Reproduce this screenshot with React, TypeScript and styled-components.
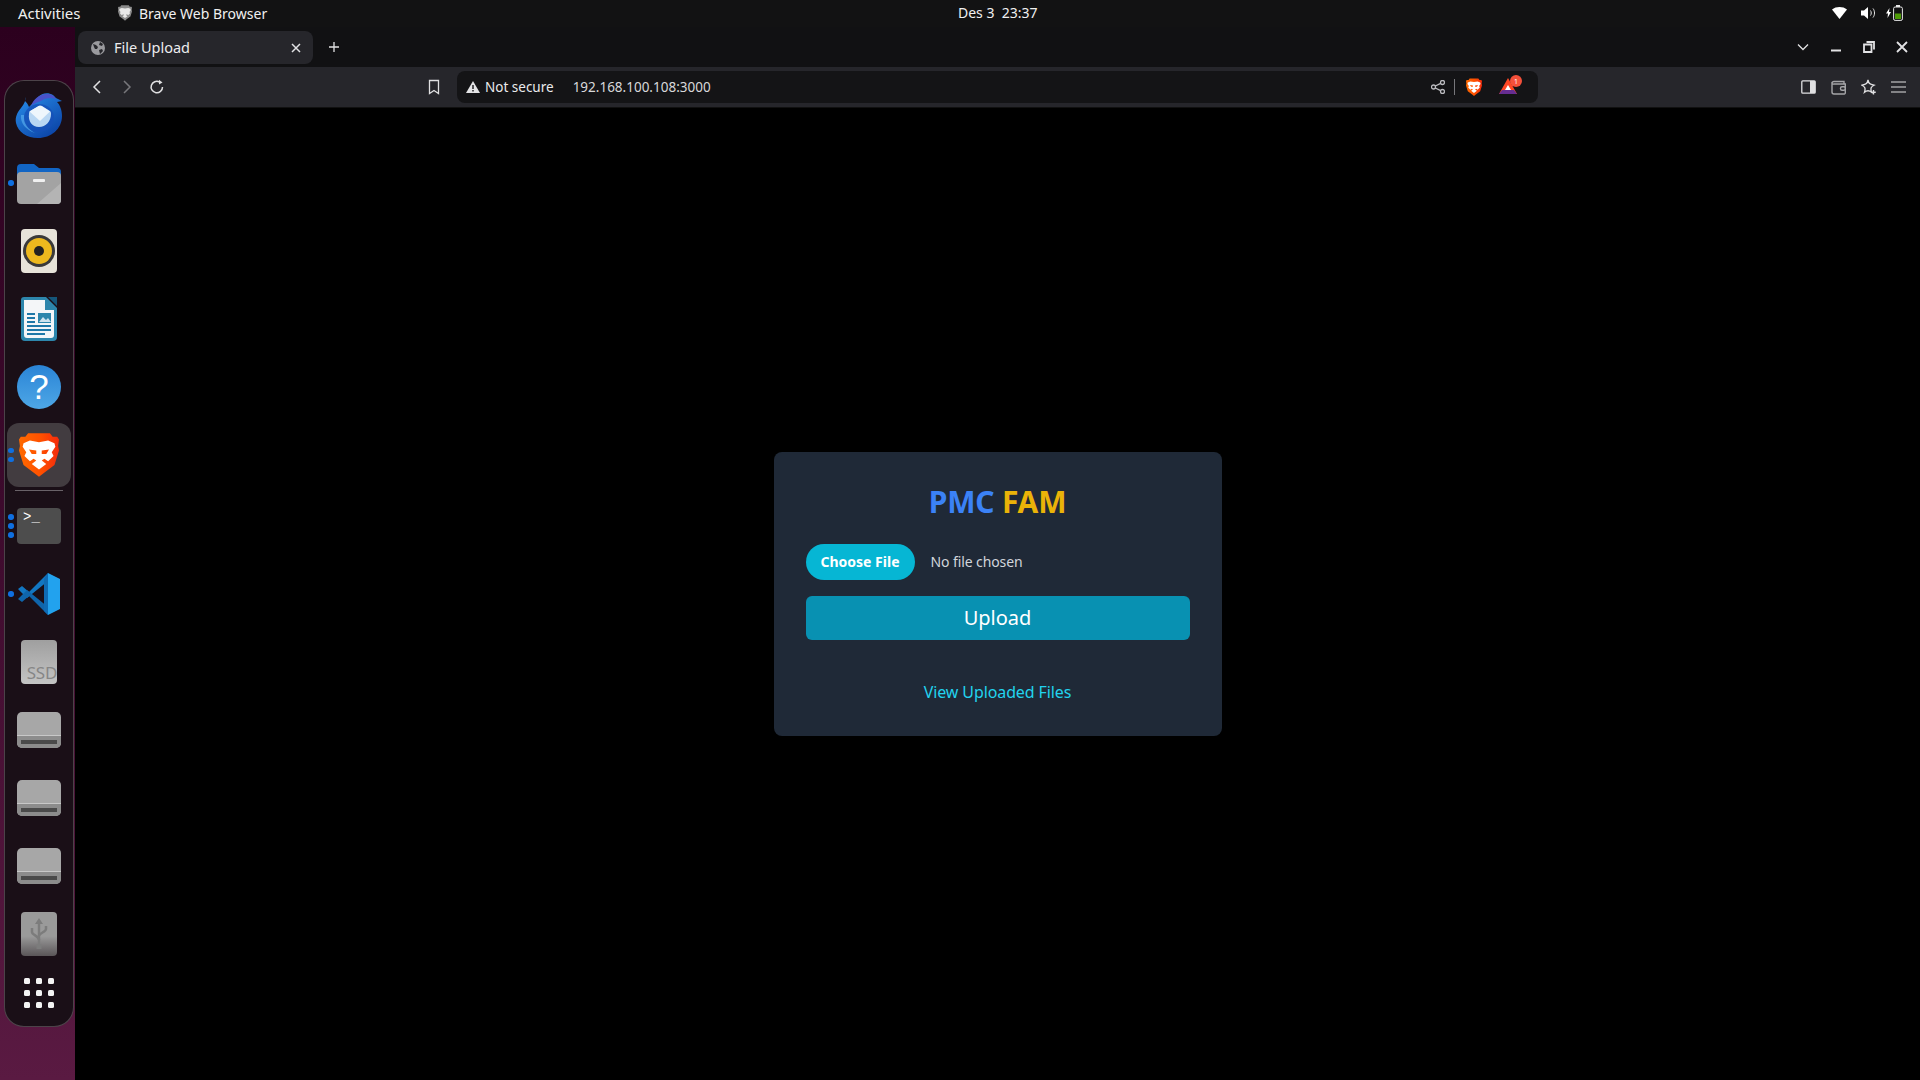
import styled, { createGlobalStyle } from "styled-components";
import { ReactNode } from "react";

const uiFont = `"Noto Sans", "Open Sans", sans-serif`;

const GlobalStyle = createGlobalStyle`
  html, body {
    margin: 0;
    padding: 0;
    height: 100%;
    background: #000;
    overflow: hidden;
  }
  #root {
    height: 100%;
  }
  * {
    box-sizing: border-box;
  }
`;

const BraveShield = ({ size = 40 }: { size?: number }) => (
  <svg width={size} height={size * 1.15} viewBox="0 0 44 50">
    <defs>
      <linearGradient id="braveFill" x1="0" y1="0" x2="1" y2="0">
        <stop offset="0" stopColor="#ff6a00" />
        <stop offset="0.55" stopColor="#ff5000" />
        <stop offset="1" stopColor="#f42a0c" />
      </linearGradient>
    </defs>
    <path
      d="M10 1h24l3 4h5l2 3-1 7 1 5-5 16-12 9-5 4-5-4-12-9-5-16 1-5-1-7 2-3h5z"
      fill="url(#braveFill)"
    />
    <path
      d="M12 9l10 2 10-2 7 3 1 4-4 6 2 4-6 6-4-3-3 2 5 4-8 6-8-6 5-4-3-2-4 3-6-6 2-4-4-6 1-4zM11 19l8 1v4h-5zM33 19l-8 1v4h5z"
      fill="#fff"
      fillRule="evenodd"
    />
  </svg>
);

const SmallShield = () => (
  <svg width="14" height="16" viewBox="0 0 44 50">
    <path
      d="M10 1h24l3 4h5l2 3-1 7 1 5-5 16-12 9-5 4-5-4-12-9-5-16 1-5-1-7 2-3h5z"
      fill="#8b8b8b"
    />
    <path d="M12 9l10 2 10-2 7 3 1 4-4 6 2 4-6 6-4-3-3 2 5 4-8 6-8-6 5-4-3-2-4 3-6-6 2-4-4-6 1-4z" fill="#e8e8e8" />
  </svg>
);

const Thunderbird = () => (
  <svg width="50" height="48" viewBox="0 0 50 48">
    <defs>
      <linearGradient id="birdBlue" x1="0" y1="0" x2="0.7" y2="1">
        <stop offset="0" stopColor="#2a93ee" />
        <stop offset="1" stopColor="#0c45a8" />
      </linearGradient>
    </defs>
    <path
      d="M11 6c1 4-1 7-4 11C3 22 1 26 2 32c2 9 11 15 22 15 13 0 24-9 24-22 0-6-2-11-5-14l5-1-6-3-3-3c-5-3-11-2-15 2l-5 6-4 4c-1-3-3-5-4-6z"
      fill="url(#birdBlue)"
    />
    <path d="M17 15c2-6 8-12 16-12 4 0 8 2 9 5-5-2-11-1-15 2-4 1-8 3-10 5z" fill="#4a52c8" />
    <path d="M7 24c-1 8 5 15 14 18-7-4-11-10-11-18z" fill="#5fb4f2" opacity="0.6" />
    <ellipse cx="25" cy="27" rx="15" ry="14" fill="#1550b8" opacity="0.8" />
    <path d="M16 20l9-5c1-.500 2-.500 3 0l8 5c1 1 1 2 1 3 0 7-5 13-12 13s-11-6-10-13c0-1 0-2 1-3z" fill="#b9d7f3" />
    <path d="M15.500 20.500l9-5.500c1-.500 2-.500 3 0l8.500 5.500L26 30z" fill="#eef6fc" />
  </svg>
);

const FilesIcon = () => (
  <svg width="44" height="41" viewBox="0 0 44 41">
    <path d="M0 5a4 4 0 0 1 4-4h13l5 4h18a4 4 0 0 1 4 4v14H0z" fill="#1265c4" />
    <rect x="0" y="9" width="44" height="32" rx="4" fill="#a3a3a3" />
    <path d="M44 20v17a4 4 0 0 1-4 4H20z" fill="#b4b4b4" />
    <rect x="16" y="16" width="12" height="3" rx="1" fill="#f0f0f0" />
  </svg>
);

const RhythmboxIcon = () => (
  <svg width="36" height="44" viewBox="0 0 36 44">
    <rect x="0" y="0" width="36" height="44" rx="4" fill="#e7e3d9" />
    <circle cx="18" cy="22" r="16" fill="#3a3a3a" />
    <circle cx="18" cy="22" r="13" fill="#edb91e" />
    <circle cx="18" cy="22" r="5" fill="#222" />
  </svg>
);

const WriterIcon = () => (
  <svg width="36" height="44" viewBox="0 0 36 44">
    <path d="M3 0h22l11 11v29a4 4 0 0 1-4 4H4a4 4 0 0 1-4-4V3a3 3 0 0 1 3-3z" fill="#2d86ac" />
    <path d="M3 3h21v10h9v25a3 3 0 0 1-3 3H6a3 3 0 0 1-3-3z" fill="#f4f6f8" />
    <path d="M27 0h9v9z" fill="#15567a" />
    <rect x="6" y="16" width="8" height="2" fill="#1f78a8" />
    <rect x="6" y="20" width="8" height="2" fill="#1f78a8" />
    <rect x="6" y="24" width="8" height="2" fill="#1f78a8" />
    <rect x="6" y="28" width="24" height="2" fill="#1f78a8" />
    <rect x="6" y="32" width="24" height="2" fill="#1f78a8" />
    <rect x="6" y="36" width="18" height="2" fill="#1f78a8" />
    <rect x="17" y="16" width="13" height="10" fill="#2d86ac" />
    <path d="M18 25l4-5 3 3 2-2 3 4z" fill="#cfe3ee" />
  </svg>
);

const VsCodeIcon = () => (
  <svg width="42" height="42" viewBox="0 0 42 42">
    <path d="M30 0l12 6v30l-12 6z" fill="#22a2ee" />
    <path d="M30 0L11 19l-7-6-4 3 9 9 21-17z" fill="#1277c2" />
    <path d="M30 42L11 23l-7 6-4-3 9-9 21 17z" fill="#0f65ab" />
    <path d="M30 0v42l-4-4V6z" fill="#0f6bb4" />
  </svg>
);

const DriveIcon = () => (
  <svg width="44" height="36" viewBox="0 0 44 36">
    <rect x="0" y="0" width="44" height="36" rx="5" fill="#a7a7a7" />
    <path d="M0 24h44v7a5 5 0 0 1-5 5H5a5 5 0 0 1-5-5z" fill="#8c8c8c" />
    <rect x="0" y="23" width="44" height="1" fill="#c8c8c8" />
    <rect x="4" y="28" width="36" height="4" fill="#4a4a4a" />
  </svg>
);

const UsbGlyph = () => (
  <svg width="20" height="32" viewBox="0 0 20 32" fill="none" stroke="#7c7c7c" strokeWidth="2.500">
    <path d="M10 4v24" />
    <path d="M10 0l-4 6h8z" fill="#7c7c7c" stroke="none" />
    <path d="M3 10v4c0 3 7 4 7 8" />
    <path d="M17 8v3c0 3-7 4-7 7" />
    <rect x="7.500" y="26" width="5" height="5" fill="#7c7c7c" stroke="none" />
  </svg>
);

const dockDots = (count: number) => (
  <RunningDots>
    {Array.from({ length: count }).map((_, i) => (
      <RunningDot key={i} />
    ))}
  </RunningDots>
);

const Dock = () => (
  <DockPanel>
    <DockItem>
      <Thunderbird />
    </DockItem>
    <DockItem>
      {dockDots(1)}
      <FilesIcon />
    </DockItem>
    <DockItem>
      <RhythmboxIcon />
    </DockItem>
    <DockItem>
      <WriterIcon />
    </DockItem>
    <DockItem>
      <HelpBall>?</HelpBall>
    </DockItem>
    <DockItem>
      <ActiveTile>
        <BraveShield />
      </ActiveTile>
      {dockDots(2)}
    </DockItem>
    <DockSeparator />
    <DockItem>
      {dockDots(3)}
      <TerminalTile>&gt;_</TerminalTile>
    </DockItem>
    <DockItem>
      {dockDots(1)}
      <VsCodeIcon />
    </DockItem>
    <DockItem>
      <SsdTile>SSD</SsdTile>
    </DockItem>
    <DockItem>
      <DriveIcon />
    </DockItem>
    <DockItem>
      <DriveIcon />
    </DockItem>
    <DockItem>
      <DriveIcon />
    </DockItem>
    <DockItem>
      <UsbTile>
        <UsbGlyph />
      </UsbTile>
    </DockItem>
    <AppGrid>
      {Array.from({ length: 9 }).map((_, i) => (
        <AppGridDot key={i} />
      ))}
    </AppGrid>
  </DockPanel>
);

const Icon = ({ w = 16, h = 16, children }: { w?: number; h?: number; children: ReactNode }) => (
  <svg width={w} height={h} viewBox={`0 0 ${w} ${h}`} fill="none" stroke="currentColor" strokeWidth="1.300">
    {children}
  </svg>
);

const TabBar = () => (
  <TabStrip>
    <Tab>
      <svg width="14" height="14" viewBox="0 0 14 14">
        <circle cx="7" cy="7" r="7" fill="#9a9a9e" />
        <path d="M2 3l3 1 2 2-1 2-2 0-1-2zM9 1l3 2-1 2-3-1zM8 9l3-1 1 2-3 3z" fill="#26262b" />
      </svg>
      <TabTitle>File Upload</TabTitle>
      <TabClose>
        <Icon w={10} h={10}>
          <path d="M1 1l8 8M9 1l-8 8" strokeWidth="1.500" />
        </Icon>
      </TabClose>
    </Tab>
    <NewTab>
      <Icon w={12} h={12}>
        <path d="M6 1v10M1 6h10" />
      </Icon>
    </NewTab>
    <WindowControls>
      <Icon w={12} h={8}>
        <path d="M1 1.500l5 5 5-5" />
      </Icon>
      <Icon w={12} h={12}>
        <path d="M1 9.500h10" strokeWidth="2" />
      </Icon>
      <Icon w={12} h={12}>
        <path d="M3.500 1h7.500v7.500M1 3.500h7.500V11H1z" strokeWidth="1.800" />
      </Icon>
      <Icon w={12} h={12}>
        <path d="M1 1l10 10M11 1L1 11" strokeWidth="1.800" />
      </Icon>
    </WindowControls>
  </TabStrip>
);

const AddressBar = () => (
  <Toolbar>
    <NavIcon>
      <Icon w={10} h={14}>
        <path d="M8 1L2 7l6 6" strokeWidth="1.500" />
      </Icon>
    </NavIcon>
    <NavIcon $dim>
      <Icon w={10} h={14}>
        <path d="M2 1l6 6-6 6" strokeWidth="1.500" />
      </Icon>
    </NavIcon>
    <NavIcon>
      <Icon w={16} h={16}>
        <path d="M13.500 8A5.700 5.700 0 1 1 10.500 3" strokeWidth="1.500" />
        <path d="M10 .8l3.500 2.700-3.500 2z" fill="currentColor" stroke="none" />
      </Icon>
    </NavIcon>
    <BookmarkSlot>
      <Icon w={12} h={16}>
        <path d="M1.500 1.500h9v13L6 11.500l-4.500 3z" strokeWidth="1.300" />
      </Icon>
    </BookmarkSlot>
    <UrlBar>
      <svg width="14" height="12" viewBox="0 0 14 12">
        <path d="M7 0l7 12H0z" fill="#e4e4e6" />
        <rect x="6.300" y="4" width="1.400" height="4" fill="#141416" />
        <rect x="6.300" y="9" width="1.400" height="1.500" fill="#141416" />
      </svg>
      <NotSecure>Not secure</NotSecure>
      <UrlText>192.168.100.108:3000</UrlText>
      <UrlActions>
        <Icon w={14} h={14}>
          <circle cx="2.500" cy="7" r="2" />
          <circle cx="11.500" cy="2.500" r="2" />
          <circle cx="11.500" cy="11.500" r="2" />
          <path d="M4.300 6l5.400-2.700M4.300 8l5.400 2.700" />
        </Icon>
        <UrlDivider />
        <BraveShield size={16} />
        <BatSlot>
          <svg width="18" height="17" viewBox="0 0 18 17">
            <path d="M9 0l9 16H0z" fill="#ff4724" />
            <path d="M0 16l3-4h12l3 4z" fill="#662d91" />
            <path d="M9 7l3 5H6z" fill="#fff" />
          </svg>
          <BatBadge>1</BatBadge>
        </BatSlot>
      </UrlActions>
    </UrlBar>
    <SideTools>
      <Icon w={15} h={14}>
        <rect x=".8" y=".8" width="13.400" height="12.400" rx="1" />
        <rect x="9" y="1" width="5" height="12" fill="currentColor" stroke="none" />
      </Icon>
      <WalletTool>
        <Icon w={15} h={15}>
          <path d="M1 3.500A2 2 0 0 1 3 1.500h10v2.500M1 3.500V12a2 2 0 0 0 2 2h10.500a1 1 0 0 0 .8-1V4H3a2 2 0 0 1-2-.500z" strokeWidth="1.400" />
          <rect x="9.500" y="6.800" width="5" height="3.400" rx="1.500" strokeWidth="1.400" />
        </Icon>
      </WalletTool>
      <Icon w={15} h={16}>
        <path d="M7 1c.7 3.400 1.500 4.300 6 5.200-3 1.600-3.700 3-2.500 7C8.500 11.500 5.500 11.500 3.500 13.200c1.200-4 .5-5.400-2.500-7C5.500 5.300 6.300 4.400 7 1z" />
        <path d="M12.500 11v4.500M10.250 13.250h4.500" strokeWidth="1.400" />
      </Icon>
      <Icon w={15} h={12}>
        <path d="M0 1h15M0 6h15M0 11h15" strokeWidth="1.200" />
      </Icon>
    </SideTools>
  </Toolbar>
);

const App = () => (
  <Page>
    <GlobalStyle />
    <TopBar>
      <Activities>Activities</Activities>
      <AppMenu>
        <SmallShield />
        <span>Brave Web Browser</span>
      </AppMenu>
      <Clock>Des 3 &nbsp;23:37</Clock>
      <StatusIcons>
        <svg width="15" height="12" viewBox="0 0 15 12">
          <path d="M0 2.500C4 -.800 11 -.800 15 2.500L7.500 12z" fill="#fff" />
        </svg>
        <svg width="15" height="14" viewBox="0 0 15 14" fill="none" stroke="#e8e8e8">
          <path d="M0 4.500h3L7 1v12L3 9.500H0z" fill="#fff" stroke="none" />
          <path d="M9.500 4.500c1 1.500 1 3.500 0 5M12 2.500c2 2.500 2 6.500 0 9" />
        </svg>
        <BatteryGroup>
          <svg width="5" height="10" viewBox="0 0 5 10">
            <path d="M3.500 0L0 5.500h2L1.500 10 5 4H3z" fill="#fff" />
          </svg>
          <svg width="10" height="16" viewBox="0 0 10 16">
            <rect x=".6" y="2" width="8.800" height="13.400" rx="1.500" fill="none" stroke="#e8e8e8" strokeWidth="1" />
            <rect x="3" y="0" width="4" height="2" fill="#e8e8e8" />
            <rect x="2" y="8.500" width="6" height="5.500" fill="#4e9a06" />
          </svg>
        </BatteryGroup>
      </StatusIcons>
    </TopBar>
    <Desktop>
      <Wallpaper>
        <Dock />
      </Wallpaper>
      <Browser>
        <TabBar />
        <AddressBar />
        <Viewport>
          <Card>
            <Title>
              <TitleBlue>PMC</TitleBlue> <TitleAmber>FAM</TitleAmber>
            </Title>
            <FileRow>
              <ChooseButton>Choose File</ChooseButton>
              <FileName>No file chosen</FileName>
            </FileRow>
            <UploadButton>Upload</UploadButton>
            <FilesLink href="#files">View Uploaded Files</FilesLink>
          </Card>
        </Viewport>
      </Browser>
    </Desktop>
  </Page>
);

export default App;

const Page = styled.div`
  display: flex;
  flex-direction: column;
  width: 1920px;
  height: 1080px;
  font-family: ${uiFont};
  overflow: hidden;
`;

const TopBar = styled.header`
  display: flex;
  align-items: center;
  flex: 0 0 27px;
  position: relative;
  padding: 0 0 1px 18px;
  background: #121213;
  color: #f0f0f0;
  font-size: 14px;
`;

const Activities = styled.span`
  width: 100px;
  font-size: 15px;
`;

const AppMenu = styled.div`
  display: flex;
  align-items: center;
  gap: 7px;
`;

const Clock = styled.span`
  position: absolute;
  left: 958px;
  top: 3px;
  font-size: 14px;
`;

const StatusIcons = styled.div`
  display: flex;
  align-items: center;
  gap: 14px;
  margin-left: auto;
  margin-right: 17px;
`;

const BatteryGroup = styled.div`
  display: flex;
  align-items: center;
  gap: 2px;
  margin-left: -4px;
`;

const Desktop = styled.div`
  display: flex;
  flex: 1;
  min-height: 0;
`;

const Wallpaper = styled.aside`
  flex: 0 0 75px;
  padding: 53px 1px 0 4px;
  background: linear-gradient(180deg, #2c001e 0%, #3c0a2c 45%, #5a1a42 100%);
`;

const DockPanel = styled.nav`
  display: flex;
  flex-direction: column;
  align-items: stretch;
  height: 947px;
  background: #1a0f17;
  border: 1px solid rgba(255, 255, 255, 0.22);
  border-radius: 20px;
`;

const DockItem = styled.div`
  position: relative;
  display: flex;
  align-items: center;
  justify-content: center;
  flex: 0 0 68px;
`;

const RunningDots = styled.div`
  position: absolute;
  left: 3px;
  top: 0;
  bottom: 0;
  display: flex;
  flex-direction: column;
  justify-content: center;
  gap: 3.5px;
`;

const RunningDot = styled.span`
  display: block;
  width: 5.5px;
  height: 5.5px;
  border-radius: 50%;
  background: #0f6fe0;
`;

const HelpBall = styled.div`
  display: flex;
  align-items: center;
  justify-content: center;
  width: 44px;
  height: 44px;
  border-radius: 50%;
  background: linear-gradient(180deg, #2a84d6 0%, #4ea7e6 100%);
  color: #fff;
  font-family: "Liberation Sans", sans-serif;
  font-size: 35px;
`;

const ActiveTile = styled.div`
  display: flex;
  align-items: center;
  justify-content: center;
  width: 64px;
  height: 64px;
  border-radius: 12px;
  background: #423c40;
`;

const DockSeparator = styled.div`
  flex: 0 0 1px;
  margin: 1px 10px 1px;
  background: rgba(255, 255, 255, 0.35);
`;

const TerminalTile = styled.div`
  width: 44px;
  height: 36px;
  padding: 0 0 0 6px;
  border-radius: 4px;
  background: #4d4d4d;
  color: #fff;
  font-family: "Liberation Mono", monospace;
  font-size: 14px;
  line-height: 18px;
`;

const SsdTile = styled.div`
  display: flex;
  align-items: flex-end;
  justify-content: flex-end;
  width: 36px;
  height: 44px;
  padding: 0 0 1px 0;
  border-radius: 4px;
  background: linear-gradient(180deg, #9f9f9f 0%, #c4c4c4 100%);
  color: #868686;
  font-size: 17px;
  line-height: 20px;
  letter-spacing: -0.3px;
`;

const UsbTile = styled.div`
  display: flex;
  align-items: center;
  justify-content: center;
  width: 36px;
  height: 44px;
  border-radius: 4px;
  background: linear-gradient(180deg, #9a9a9a 0%, #9a9a9a 55%, #5a5558 100%);
`;

const AppGrid = styled.div`
  display: grid;
  grid-template-columns: repeat(3, 6px);
  gap: 6px;
  justify-content: center;
  align-content: center;
  flex: 0 0 50px;
`;

const AppGridDot = styled.span`
  width: 6px;
  height: 6px;
  border-radius: 1.5px;
  background: #f4f4f4;
`;

const Browser = styled.main`
  display: flex;
  flex-direction: column;
  flex: 1;
  min-width: 0;
`;

const TabStrip = styled.div`
  display: flex;
  align-items: center;
  flex: 0 0 40px;
  padding: 0 12px 0 3px;
  background: #111113;
  color: #e2e2e4;
`;

const Tab = styled.div`
  display: flex;
  align-items: center;
  width: 235px;
  height: 33px;
  padding: 0 12px 0 13px;
  margin-top: 1px;
  border-radius: 8px;
  background: #26262b;
`;

const TabTitle = styled.span`
  margin: 0 0 2px 9px;
  font-size: 14.5px;
  color: #ececee;
`;

const TabClose = styled.span`
  display: flex;
  margin-left: auto;
`;

const NewTab = styled.span`
  display: flex;
  margin-left: 15px;
`;

const WindowControls = styled.div`
  display: flex;
  align-items: center;
  gap: 21px;
  margin-left: auto;
`;

const Toolbar = styled.div`
  display: flex;
  align-items: center;
  flex: 0 0 41px;
  padding-left: 7px;
  background: #26262b;
  border-bottom: 1px solid #111;
  color: #e0e0e2;
`;

const NavIcon = styled.span<{ $dim?: boolean }>`
  display: flex;
  justify-content: center;
  width: 30px;
  color: ${(p) => (p.$dim ? "#77777b" : "#e0e0e2")};
`;

const BookmarkSlot = styled.span`
  display: flex;
  margin-left: 256px;
`;

const UrlBar = styled.div`
  display: flex;
  align-items: center;
  width: 1081px;
  height: 32px;
  margin-left: 17px;
  padding: 0 21px 0 9px;
  border-radius: 8px;
  background: #141416;
`;

const NotSecure = styled.span`
  margin-left: 5px;
  font-size: 13.5px;
  color: #eaeaec;
`;

const UrlText = styled.span`
  margin-left: 19px;
  font-size: 13.5px;
  color: #d8d8da;
`;

const UrlActions = styled.div`
  display: flex;
  align-items: center;
  margin-left: auto;
  gap: 9px;
  color: #bcbcc0;
`;

const UrlDivider = styled.span`
  width: 1px;
  height: 16px;
  margin-right: 2px;
  background: #77777b;
`;

const BatSlot = styled.span`
  position: relative;
  display: flex;
  margin-left: 8px;
`;

const BatBadge = styled.span`
  position: absolute;
  top: -3px;
  right: -5px;
  display: flex;
  align-items: center;
  justify-content: center;
  width: 12px;
  height: 12px;
  border-radius: 50%;
  background: #f4503a;
  color: #fff;
  font-size: 7px;
  line-height: 1;
`;

const SideTools = styled.div`
  display: flex;
  align-items: center;
  gap: 15px;
  margin-left: auto;
  margin-right: 14px;
`;

const WalletTool = styled.span`
  display: flex;
  color: #a5a5a8;
`;

const Viewport = styled.section`
  display: flex;
  align-items: center;
  justify-content: center;
  flex: 1;
  background: #000;
`;

const Card = styled.div`
  display: flex;
  flex-direction: column;
  width: 448px;
  height: 284px;
  padding: 32px;
  border-radius: 8px;
  background: #1f2937;
`;

const Title = styled.h1`
  margin: 0;
  font-size: 30px;
  line-height: 36px;
  font-weight: 700;
  letter-spacing: -0.2px;
  text-align: center;
`;

const TitleBlue = styled.span`
  color: #3b82f6;
`;

const TitleAmber = styled.span`
  color: #eab308;
`;

const FileRow = styled.div`
  display: flex;
  align-items: center;
  margin-top: 24px;
`;

const ChooseButton = styled.span`
  display: flex;
  align-items: center;
  justify-content: center;
  width: 109px;
  height: 36px;
  padding-bottom: 2px;
  border-radius: 18px;
  background: #06b6d4;
  color: #fff;
  font-size: 14px;
  font-weight: 700;
`;

const FileName = styled.span`
  margin-left: 16px;
  margin-bottom: 1px;
  font-size: 14px;
  letter-spacing: -0.1px;
  color: #d1d5db;
`;

const UploadButton = styled.button`
  height: 44px;
  margin-top: 16px;
  padding-bottom: 3px;
  border: 0;
  border-radius: 6px;
  background: #0891b2;
  color: #fff;
  font-family: inherit;
  font-size: 20px;
`;

const FilesLink = styled.a`
  margin-top: 40px;
  font-size: 16px;
  line-height: 24px;
  letter-spacing: -0.1px;
  text-align: center;
  text-decoration: none;
  color: #22d3ee;
`;
